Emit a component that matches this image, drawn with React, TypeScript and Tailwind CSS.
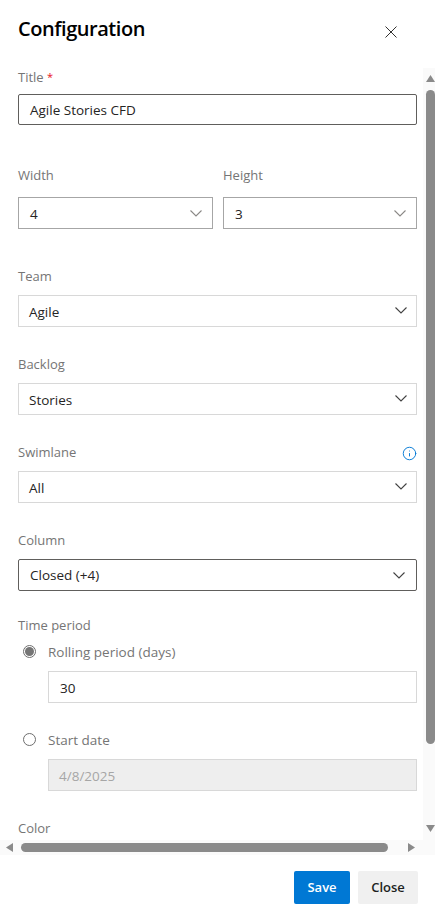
import { Info } from "lucide-react";
import type { ReactNode } from "react";

function Chevron({ thin }: { thin?: boolean }) {
  return (
    <svg
      width="12"
      height="7"
      viewBox="0 0 12 7"
      fill="none"
      stroke={thin ? "#8a8886" : "#424242"}
      strokeWidth="1.1"
      className="shrink-0"
    >
      <path d="M0.5 0.5L6 6l5.5-5.5" />
    </svg>
  );
}

function Label({ children, className = "" }: { children: ReactNode; className?: string }) {
  return (
    <div className={`h-[20px] text-[13px] leading-[20px] text-[#757575] ${className}`}>
      {children}
    </div>
  );
}

function Select({ value, kind = "plain" }: { value: string; kind?: "plain" | "size" | "active" }) {
  const box = {
    plain: "border-[#d8d8d8] pl-[10px] pr-[9px]",
    size: "border-[#a6a6a6] pl-[11px] pr-[10px]",
    active: "rounded-[2px] border-[#605e5c] pl-[11px] pr-[11px]",
  }[kind];
  const text = kind === "active" ? "pt-px" : "pt-[3px]";
  return (
    <div
      className={`flex h-[32px] items-center justify-between border bg-white text-[13.5px] text-[#252423] ${box}`}
    >
      <span className={text}>{value}</span>
      <span className={kind === "plain" ? "mb-[2px]" : ""}>
        <Chevron thin={kind === "size"} />
      </span>
    </div>
  );
}

function Radio({ checked }: { checked?: boolean }) {
  return (
    <span className="flex h-[13px] w-[13px] shrink-0 items-center justify-center rounded-full border border-[#6e6e6e]">
      {checked && <span className="h-[9px] w-[9px] rounded-full bg-[#757575]" />}
    </span>
  );
}

function ArrowV({ down }: { down?: boolean }) {
  return (
    <svg width="9" height="7" viewBox="0 0 9 7" fill="#8a8a8a" className="shrink-0">
      <polygon points={down ? "0,0 9,0 4.5,7" : "0,7 9,7 4.5,0"} />
    </svg>
  );
}

function ArrowH({ right }: { right?: boolean }) {
  return (
    <svg width="8" height="9" viewBox="0 0 8 9" fill="#8a8a8a" className="shrink-0">
      <polygon points={right ? "0,0 0,9 7,4.5" : "8,0 8,9 1,4.5"} />
    </svg>
  );
}

export default function App() {
  return (
    <div className="flex h-[914px] w-[435px] flex-col overflow-hidden bg-white font-['Open_Sans','Noto_Sans',sans-serif]">
      <div className="flex h-[68px] shrink-0 items-start justify-between pl-[18px] pr-[38px] pt-[14px]">
        <h1 className="text-[20px] font-semibold leading-[30px] tracking-[-0.45px] text-black">
          Configuration
        </h1>
        <svg
          width="12"
          height="12"
          viewBox="0 0 12 12"
          fill="none"
          stroke="#323130"
          strokeWidth="1"
          className="mt-[12px]"
        >
          <path d="M0.5 0.5l11 11M11.5 0.5l-11 11" />
        </svg>
      </div>

      <div className="flex h-[772px] shrink-0">
        <div className="w-[423px] shrink-0 overflow-hidden pl-[18px] pr-[6px]">
          <Label className="-mt-[1px]">
            Title <span className="align-[1px] text-[11px] text-[#e81123]">*</span>
          </Label>
          <div className="mt-[7px] flex h-[31px] items-center rounded-[2px] border border-[#605e5c] bg-white pl-[11px] pt-px text-[13.5px] text-[#252423]">
            Agile Stories CFD
          </div>

          <div className="mt-[40px] flex gap-[10px]">
            <div className="w-[195px]">
              <Label>Width</Label>
              <div className="mt-[12px]">
                <Select value="4" kind="size" />
              </div>
            </div>
            <div className="w-[194px]">
              <Label>Height</Label>
              <div className="mt-[12px]">
                <Select value="3" kind="size" />
              </div>
            </div>
          </div>

          <Label className="mt-[37px]">Team</Label>
          <div className="mt-[9px]">
            <Select value="Agile" />
          </div>

          <Label className="mt-[27px]">Backlog</Label>
          <div className="mt-[9px]">
            <Select value="Stories" />
          </div>

          <div className="mt-[27px] flex items-center justify-between">
            <Label>Swimlane</Label>
            <Info size={15} strokeWidth={1.5} className="mt-[3px] text-[#0078d4]" />
          </div>
          <div className="mt-[9px]">
            <Select value="All" />
          </div>

          <Label className="mt-[27px]">Column</Label>
          <div className="mt-[9px]">
            <Select value="Closed (+4)" kind="active" />
          </div>

          <Label className="mt-[24px]">Time period</Label>
          <div className="mt-[6px] flex h-[20px] items-center pl-[5px]">
            <Radio checked />
            <span className="ml-[12px] pt-[3px] text-[13.5px] text-[#757575]">
              Rolling period (days)
            </span>
          </div>
          <div className="ml-[30px] mt-[10px] flex h-[32px] items-center border border-[#d8d8d8] bg-white pl-[11px] pt-[3px] text-[13.5px] text-[#252423]">
            30
          </div>

          <div className="mt-[26px] flex h-[20px] items-center pl-[5px]">
            <Radio />
            <span className="ml-[12px] pt-[3px] text-[13.5px] text-[#757575]">Start date</span>
          </div>
          <div className="ml-[30px] mt-[10px] flex h-[32px] items-center border border-[#d8d8d8] bg-[#eeeeee] pl-[10px] pt-[3px] text-[13.5px] text-[#a6a6a6]">
            4/8/2025
          </div>

          <Label className="mt-[27px]">Color</Label>
        </div>

        <div className="flex w-[12px] shrink-0 flex-col items-end bg-[#fafafa] pb-[8px] pt-[7px]">
          <ArrowV />
          <div className="mt-[8px] h-[654px] w-[9px] rounded-full bg-[#8a8a8a]" />
          <div className="mt-auto">
            <ArrowV down />
          </div>
        </div>
      </div>

      <div className="flex h-[15px] shrink-0 items-center bg-[#fafafa] pl-[5px] pr-[19px]">
        <ArrowH />
        <div className="ml-[8px] h-[9px] w-[367px] rounded-full bg-[#8a8a8a]" />
        <div className="ml-auto">
          <ArrowH right />
        </div>
      </div>

      <div className="flex flex-1 items-start justify-end gap-[8px] pr-[17px] pt-[16px]">
        <button
          type="button"
          className="h-[33px] w-[56px] rounded-[2px] bg-[#0078d4] text-[13px] font-semibold text-white"
        >
          Save
        </button>
        <button
          type="button"
          className="h-[33px] w-[60px] rounded-[2px] bg-[#f0f0f0] text-[13px] font-semibold text-[#201f1e]"
        >
          Close
        </button>
      </div>
    </div>
  );
}
